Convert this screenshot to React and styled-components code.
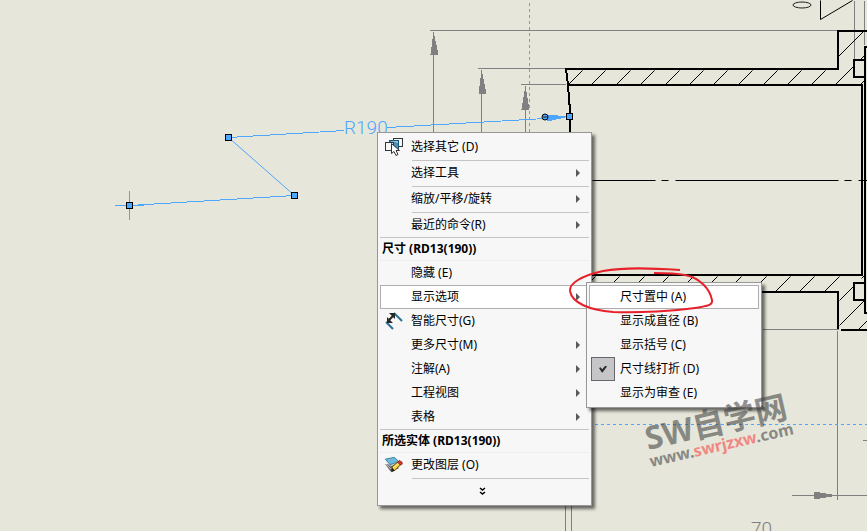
import styled, { createGlobalStyle } from 'styled-components';

const GlobalStyle = createGlobalStyle`
  *{
    box-sizing:border-box;
  }
  body{
    margin:0;
    background-color:#e6e6da;
    font-family:'Noto Sans', 'Noto Sans CJK SC', sans-serif;
    font-size:12px;
    color:#000;
  }
`
const Canvas = styled.main`
  position:relative;
  width:100%;
  min-height:100vh;
  overflow:hidden;
`
const Drawing = styled.svg`
  position:absolute;
  inset:0;
  width:100%;
  height:100%;
`
const Overlay = styled(Drawing)`
  pointer-events:none;
`
const DimText = styled.text`
  font-family:Roboto, sans-serif;
  font-size:19px;
  font-weight:300;
  fill:${props => props.$color};
`
const Menu = styled.ul`
  position:absolute;
  left:377px;
  top:132px;
  width:215px;
  margin:0;
  padding:2px;
  list-style:none;
  background-color:#f7f7f7;
  border:1px solid #979797;
  box-shadow:3px 3px 3px rgba(0,0,0,0.55);
`
const SubMenu = styled(Menu)`
  left:calc(100% - 3px);
  top:-3px;
  width:176px;
`
const Item = styled.li`
  position:relative;
`
const Row = styled.button`
  display:flex;
  align-items:center;
  gap:8px;
  width:100%;
  height:24px;
  padding:0 8px 0 4px;
  border:1px solid ${props => (props.$active ? '#aeaeae' : 'transparent')};
  background-color:${props => (props.$active ? '#fff' : 'transparent')};
  font:inherit;
  color:inherit;
  text-align:left;
  cursor:default;
`
const SubRow = styled(Row)`
  gap:5px;
  padding:0 8px 0 1px;
`
const Label = styled.span`
  flex:1;
  line-height:22px;
  white-space:nowrap;
`
const IconSlot = styled.span`
  display:flex;
  flex:none;
  width:18px;
  height:18px;
`
const CheckSlot = styled.span`
  flex:none;
  width:24px;
`
const CheckBox = styled.input`
  appearance:none;
  flex:none;
  width:24px;
  height:24px;
  margin:0;
  border:1px solid #66666c;
  background-color:#c6c6c9;
  display:grid;
  place-items:center;
  &:checked::before{
    content:'';
    width:8px;
    height:7px;
    background-color:#2d2d30;
    clip-path:polygon(0 35%, 20% 25%, 40% 55%, 80% 0, 100% 15%, 45% 100%, 35% 100%);
  }
`
const Arrow = styled.span`
  flex:none;
  border-left:4px solid #595959;
  border-top:4px solid transparent;
  border-bottom:4px solid transparent;
`
const Separator = styled.li`
  height:2px;
  margin-left:32px;
  border-bottom:1px solid #c4c4c4;
`
const Heading = styled.li`
  height:24px;
  padding-left:2px;
  line-height:22px;
  font-weight:700;
  border-top:1px solid #c4c4c4;
  border-bottom:1px solid #eeeeee;
`
const More = styled.button`
  display:flex;
  align-items:center;
  justify-content:center;
  width:100%;
  height:24px;
  padding:0 4px 0 0;
  border:none;
  background:none;
`
const Watermark = styled.text`
  font-family:'Noto Sans', 'Noto Sans CJK SC', sans-serif;
  font-size:${props => props.$size}px;
  font-weight:${props => props.$weight};
  fill:#3c3c3c;
`

const SelectIcon = () => (
  <svg width='18' height='18' viewBox='0 0 18 18' aria-hidden='true'>
    <rect x='8.5' y='0.5' width='9' height='8' fill='#f4f6f8' stroke='#30353a' />
    <rect x='4.5' y='2.5' width='9' height='9' fill='#4590b8' stroke='#20536e' />
    <path d='M5 3h8v2z' fill='#8fc4df' />
    <rect x='0.5' y='4.5' width='8' height='8' fill='#f4f6f8' stroke='#30353a' />
    <path d='M6.5 5.5v10l2.5-2 2 4 2-1-2-4h3.5z' fill='#fff' stroke='#333' />
  </svg>
)
const DimensionIcon = () => (
  <svg width='18' height='18' viewBox='0 0 18 18' aria-hidden='true'>
    <path d='M9 1l8 8M1 10l7 7' stroke='#2b7095' strokeWidth='2' fill='none' />
    <path d='M3 9l6-6' stroke='#222' strokeWidth='2' />
    <path d='M4 1h6v6zM2 5v6h6z' fill='#272727' />
  </svg>
)
const LayerIcon = () => (
  <svg width='20' height='18' viewBox='0 0 20 18' aria-hidden='true'>
    <path d='M0 8l6 8 9-3V9z' fill='#666' />
    <path d='M1 8l5 5 9-3M1 5l5 5 9-3' stroke='#e2e2e2' strokeWidth='1' fill='none' />
    <path d='M0.5 2.5l10-2 5 5-10 3z' fill='#6db9dc' stroke='#3b7896' />
    <path d='M7 16l1-5 7-6 3 3-7 7z' fill='#f6d33c' stroke='#4b3310' />
    <path d='M9 12l6-5' stroke='#fff3a0' />
    <path d='M14 6l2-2 3 2v2l-2 1z' fill='#d8392b' stroke='#8a211a' />
    <path d='M7 17l1-5 3 3z' fill='#222' />
  </svg>
)

const Handle = ({ x, y }) => (
  <rect x={x - 3} y={y - 3} width='6' height='6' fill='#4da6ff' stroke='#000' />
)

const topHatch = [568, 591, 616, 640, 665, 689, 713, 738, 763, 787, 811]
const bottomHatch = [580, 604, 629, 653, 678, 702, 726, 751, 775, 799, 824]

const Part = () => (
  <Drawing aria-hidden='true' shapeRendering='crispEdges'>
    <g transform='translate(0.5 0.5)' fill='none' strokeWidth='1'>
      <g stroke='#808080'>
        <path d='M429 30H838M477 68H564M520 84H565' />
        <path d='M433 31V140M481 69V140M525 85V140' />
        <path d='M854 0V58M864 0V44' />
        <path d='M762 329H838M837 330V499M791 495H867M862 440H867' />
        <path d='M565 500V531M571 500V531' />
      </g>
      <g fill='#808080'>
        <path d='M433 31L438 54H430z' />
        <path d='M481 69L486 93H478z' />
        <path d='M525 85L529 109H521z' />
        <path d='M837 495L813 499V491z' />
      </g>
      <g stroke='#4da6ff'>
        <path d='M529 2V140' strokeDasharray='3 3' />
        <path d='M594 424H867' strokeDasharray='3 3' />
        <path d='M114 205H143M129 190V219' />
        <path d='M129 205L294 195M228 137L344 130M387 127L545 118' />
        <path d='M294 195L228 137' shapeRendering='auto' />
      </g>
      <path d='M545 114L569 116L547 121z' fill='#4da6ff' />
      <g stroke='#000' shapeRendering='auto'>
        {topHatch.map(x => <path key={x} d={`M${x} 84L${x + 14} 70`} />)}
        {bottomHatch.map(x => <path key={x} d={`M${x} 291L${x + 15} 276`} />)}
        <path d='M835 84L854 65M838 56L863 31M860 59L865 54M860 84L865 79' />
        <path d='M839 300L854 285M861 278L864 275M839 325L864 300M858 329L867 320' />
        <path d='M592 180H655M661 180H668M675 180H838M844 180H851M858 180H867' />
        <path d='M820 0V19L852 0' />
      </g>
    </g>
    <g fill='none' stroke='#000' strokeWidth='2'>
      <path d='M867 31H838V69H566L568 85L570 111V140' />
      <path d='M568 85H862V275H592' />
      <path d='M867 47H865V313H867' />
      <path d='M865 60H854V77H865M865 283H854V300H865' />
      <path d='M762 292H838V329M841 330H867' />
    </g>
    <g transform='translate(0.5 0.5)'>
      <Handle x={129} y={205} />
      <Handle x={294} y={195} />
      <Handle x={228} y={137} />
      <Handle x={569} y={116} />
    </g>
    <g fill='none' stroke='#222' shapeRendering='auto'>
      <ellipse cx='802' cy='5' rx='9' ry='3' />
      <circle cx='545' cy='117' r='3' fill='#4da6ff' stroke='#000' />
      <path d='M543 117H547' />
    </g>
    <DimText x='344' y='134' $color='#4da6ff'>R190</DimText>
    <DimText x='751' y='535' $color='#808080'>70</DimText>
  </Drawing>
)

const MenuItem = ({ icon, label, more, active, children }) => (
  <Item role='none'>
    <Row type='button' role='menuitem' $active={active} aria-haspopup={more ? 'menu' : undefined}>
      <IconSlot>{icon}</IconSlot>
      <Label>{label}</Label>
      {more && <Arrow />}
    </Row>
    {children}
  </Item>
)

const SubItem = ({ label, active }) => (
  <Item role='none'>
    <SubRow type='button' role='menuitem' $active={active}>
      <CheckSlot />
      <Label>{label}</Label>
    </SubRow>
  </Item>
)

const App = () => {
  return (
    <Canvas>
      <GlobalStyle />
      <Part />
      <Menu role='menu'>
        <MenuItem icon={<SelectIcon />} label='选择其它 (D)' />
        <Separator />
        <MenuItem label='选择工具' more />
        <Separator />
        <MenuItem label='缩放/平移/旋转' more />
        <Separator />
        <MenuItem label='最近的命令(R)' more />
        <Heading>尺寸 (RD13(190))</Heading>
        <MenuItem label='隐藏 (E)' />
        <MenuItem label='显示选项' more active>
          <SubMenu role='menu'>
            <SubItem label='尺寸置中 (A)' active />
            <SubItem label='显示成直径 (B)' />
            <SubItem label='显示括号 (C)' />
            <Item role='none'>
              <SubRow as='label' htmlFor='jog'>
                <CheckBox id='jog' type='checkbox' defaultChecked />
                <Label>尺寸线打折 (D)</Label>
              </SubRow>
            </Item>
            <SubItem label='显示为审查 (E)' />
          </SubMenu>
        </MenuItem>
        <MenuItem icon={<DimensionIcon />} label='智能尺寸(G)' />
        <MenuItem label='更多尺寸(M)' more />
        <MenuItem label='注解(A)' more />
        <MenuItem label='工程视图' more />
        <MenuItem label='表格' more />
        <Heading>所选实体 (RD13(190))</Heading>
        <MenuItem icon={<LayerIcon />} label='更改图层 (O)' />
        <Separator />
        <Item role='none'>
          <More type='button' aria-label='展开'>
            <svg width='7' height='9' viewBox='0 0 7 9' fill='none' stroke='#000' strokeWidth='1.5'>
              <path d='M1 1l2.5 2L6 1M1 5l2.5 2L6 5' />
            </svg>
          </More>
        </Item>
      </Menu>
      <Overlay>
        <path
          d='M680 270C650 268 625 267 603 271C580 276 569 284 570 291C572 303 589 310 613 312C640 313 675 311 695 308C708 306 713 305 712 300C710 289 700 278 685 275C675 273 664 273 654 273'
          fill='none'
          stroke='#e8202a'
          strokeWidth='2'
        />
        <g opacity='0.55'>
          <Watermark $size={32} $weight={700} transform='translate(648 450) rotate(-13)'>SW自学网</Watermark>
          <Watermark $size={16} $weight={700} transform='translate(651 467) rotate(-13)'>
            www.<tspan fill='#f83c3c'>swrjzxw</tspan>.com
          </Watermark>
        </g>
      </Overlay>
    </Canvas>
  )
}

export default App
